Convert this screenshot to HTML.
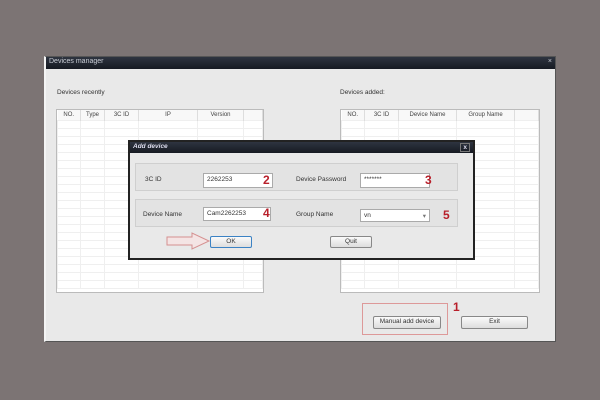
<!DOCTYPE html>
<html><head><style>
*{margin:0;padding:0;box-sizing:border-box}
body{width:600px;height:400px;background:#7c7474;position:relative;overflow:hidden;font-family:"Liberation Sans",sans-serif;font-size:6.5px;color:#333}
.a{position:absolute}
.win{left:44px;top:56px;width:512px;height:286px;background:#e9e9e9;border:1px solid #555;border-left:2px solid #f4f4f4}
.tb{background:linear-gradient(#2e3440,#161a22);color:#c8ccd4;font-size:7px;padding:1px 3px}
.tbl{background:#fff;border:1px solid #bbb;overflow:hidden}
.tbl table{border-collapse:collapse;width:100%}
.tbl td{border:1px solid #efefef;height:8px;padding:0}
.tbl th{font-weight:normal;height:10px;border-right:1px solid #ddd;background:#f8f8f8;text-align:center;font-size:6px;color:#444}
.grp{border:1px solid #cfcfcf;background:#e3e3e3}
.inp{background:#fff;border:1px solid #aaa;padding:2px 3px;font-size:6.5px}
.btn{background:linear-gradient(#fafafa,#ddd);border:1px solid #888;text-align:center;font-size:6.5px;line-height:10px;border-radius:2px}
.n{color:#b81f2a;font-weight:bold;font-size:12px}
</style></head><body>
<div class="a win">
 <div class="tb" style="height:12px">Devices manager<span style="float:right">×</span></div>
</div>
<div class="a" style="left:57px;top:89px;font-size:6.5px">Devices recently</div>
<div class="a" style="left:340px;top:89px;font-size:6.5px">Devices added:</div>
<div class="a tbl" style="left:56px;top:109px;width:208px;height:184px">
<table><tr><th style="width:23px">NO.</th><th style="width:24px">Type</th><th style="width:34px">3C ID</th><th style="width:59px">IP</th><th style="width:46px">Version</th><th></th></tr>
<tbody id="l"></tbody></table></div>
<div class="a tbl" style="left:340px;top:109px;width:200px;height:184px">
<table><tr><th style="width:23px">NO.</th><th style="width:34px">3C ID</th><th style="width:58px">Device Name</th><th style="width:58px">Group Name</th><th></th></tr>
<tbody id="r"></tbody></table></div>
<div class="a" style="left:128px;top:140px;width:347px;height:120px;background:#e9e9e9;border:2px solid #222">
 <div class="tb" style="height:11px;font-weight:bold;font-style:italic;font-size:6.5px;color:#dde">Add device<span style="float:right;border:1px solid #777;padding:0 2px;font-style:normal">x</span></div>
</div>
<div class="a grp" style="left:135px;top:163px;width:323px;height:28px"></div>
<div class="a grp" style="left:135px;top:199px;width:323px;height:28px"></div>
<div class="a" style="left:145px;top:176px">3C ID</div>
<div class="a inp" style="left:203px;top:173px;width:70px;height:15px">2262253</div>
<div class="a n" style="left:263px;top:173px">2</div>
<div class="a" style="left:296px;top:176px">Device Password</div>
<div class="a inp" style="left:360px;top:173px;width:70px;height:15px">*******</div>
<div class="a n" style="left:425px;top:173px">3</div>
<div class="a" style="left:143px;top:211px">Device Name</div>
<div class="a inp" style="left:203px;top:207px;width:68px;height:14px">Cam2262253</div>
<div class="a n" style="left:263px;top:206px">4</div>
<div class="a" style="left:296px;top:211px">Group Name</div>
<div class="a inp" style="left:360px;top:209px;width:70px;height:13px">vn<span style="float:right;color:#777">▾</span></div>
<div class="a n" style="left:443px;top:208px">5</div>
<svg class="a" style="left:166px;top:232px" width="46" height="18"><path d="M1 5 H26 V1 L43 9 L26 17 V13 H1 Z" fill="#f4e4e4" stroke="#d59090" stroke-width="1"/></svg>
<div class="a btn" style="left:210px;top:236px;width:42px;height:12px;border-color:#3b82c4">OK</div>
<div class="a btn" style="left:330px;top:236px;width:42px;height:12px">Quit</div>
<div class="a" style="left:362px;top:303px;width:86px;height:32px;border:1px solid #d99"></div>
<div class="a n" style="left:453px;top:300px">1</div>
<div class="a btn" style="left:373px;top:316px;width:68px;height:13px">Manual add device</div>
<div class="a btn" style="left:461px;top:316px;width:67px;height:13px">Exit</div>
<script>
var l='',r='';for(var i=0;i<21;i++){l+='<tr><td></td><td></td><td></td><td></td><td></td><td></td></tr>';r+='<tr><td></td><td></td><td></td><td></td><td></td></tr>';}
document.getElementById('l').innerHTML=l;document.getElementById('r').innerHTML=r;
</script>
</body></html>
